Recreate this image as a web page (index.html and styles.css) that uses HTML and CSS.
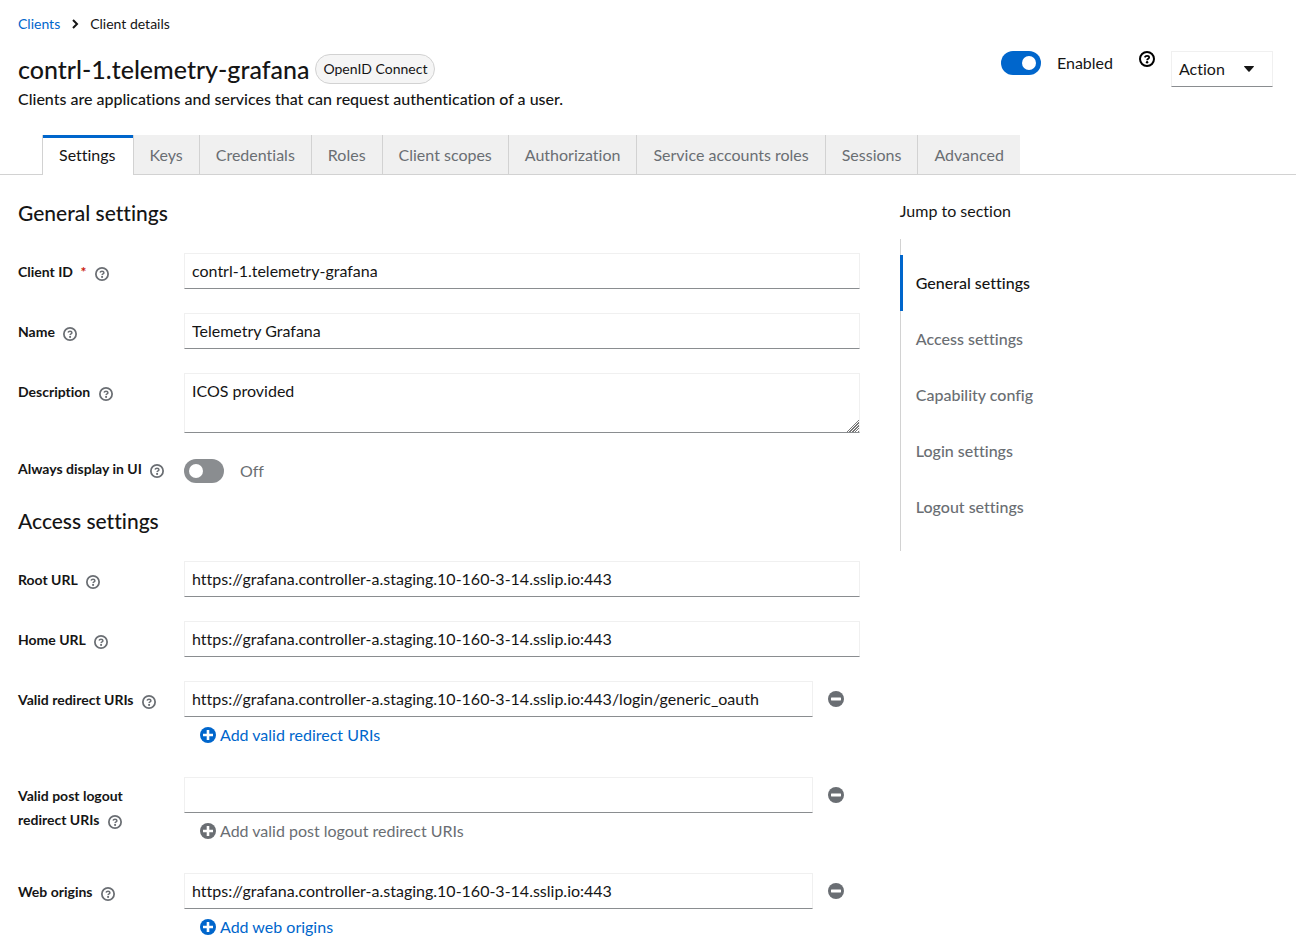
FILE: index.html
```html
<!DOCTYPE html>
<html lang="en">
  <head>
    <meta charset="UTF-8" />
    <meta name="viewport" content="width=device-width, initial-scale=1.0" />
    <title>Client details</title>
    <link rel="stylesheet" href="styles.css">
  </head>
  <body>
    <!-- shared icons -->
    <svg class="sprite" aria-hidden="true">
      <symbol id="help" viewBox="0 0 16 16">
        <circle cx="8" cy="8" r="7" fill="none" stroke="currentColor" stroke-width="2" />
        <path d="M5.700 6.400C6.100 5.300 7 4.900 8 4.900c1.200 0 2.200.600 2.200 1.600C10.200 7.800 8.100 7.800 8.100 9.200" fill="none" stroke="currentColor" stroke-width="1.700" />
        <circle cx="8.100" cy="11.300" r="1.200" fill="currentColor" />
      </symbol>
      <symbol id="plus" viewBox="0 0 16 16">
        <circle cx="8" cy="8" r="8" fill="currentColor" />
        <path d="M8 3v10M3 8h10" stroke="#fff" stroke-width="2.600" />
      </symbol>
      <symbol id="minus" viewBox="0 0 16 16">
        <circle cx="8" cy="8" r="8" fill="currentColor" />
        <rect x="3" y="6.600" width="10" height="2.800" rx=".4" fill="#fff" />
      </symbol>
    </svg>

    <header class="header">
      <nav class="breadcrumb" aria-label="Breadcrumb">
        <a href="#">Clients</a>
        <svg width="8" height="10" viewBox="0 0 8 10"><path d="M2 1l4 4-4 4" fill="none" stroke="#151515" stroke-width="2" /></svg>
        <span>Client details</span>
      </nav>
      <div class="title-row">
        <div>
          <div class="title">
            <h1>contrl-1.telemetry-grafana</h1>
            <span class="badge">OpenID Connect</span>
          </div>
          <p>Clients are applications and services that can request authentication of a user.</p>
        </div>
        <div class="toolbar">
          <label class="switch">
            <input type="checkbox" checked>
            <span>Enabled</span>
          </label>
          <button class="help help-dark" aria-label="Help"><svg><use href="#help" /></svg></button>
          <button class="action">Action <svg width="10" height="6" viewBox="0 0 10 6"><path d="M0 .5Q0 0 .5 0h9q.5 0 .5.500L5.600 5.600Q5 6 4.400 5.600z" fill="#151515" /></svg></button>
        </div>
      </div>
    </header>

    <nav class="tabs">
      <button class="tab active">Settings</button>
      <button class="tab">Keys</button>
      <button class="tab">Credentials</button>
      <button class="tab">Roles</button>
      <button class="tab">Client scopes</button>
      <button class="tab">Authorization</button>
      <button class="tab">Service accounts roles</button>
      <button class="tab">Sessions</button>
      <button class="tab">Advanced</button>
    </nav>

    <main class="content">
      <form>
        <h2 id="general">General settings</h2>
        <div class="row">
          <div class="label">
            <label for="client-id">Client ID <span class="required">*</span></label>
            <button type="button" class="help" aria-label="Help"><svg><use href="#help" /></svg></button>
          </div>
          <input type="text" class="field" id="client-id" value="contrl-1.telemetry-grafana">
        </div>
        <div class="row">
          <div class="label">
            <label for="name">Name</label>
            <button type="button" class="help" aria-label="Help"><svg><use href="#help" /></svg></button>
          </div>
          <input type="text" class="field" id="name" value="Telemetry Grafana">
        </div>
        <div class="row">
          <div class="label">
            <label for="description">Description</label>
            <button type="button" class="help" aria-label="Help"><svg><use href="#help" /></svg></button>
          </div>
          <textarea class="field" id="description">ICOS provided</textarea>
        </div>
        <div class="row row-switch">
          <div class="label">
            <label for="always">Always display in UI</label>
            <button type="button" class="help" aria-label="Help"><svg><use href="#help" /></svg></button>
          </div>
          <label class="switch">
            <input type="checkbox" id="always">
            <span>Off</span>
          </label>
        </div>

        <h2 id="access">Access settings</h2>
        <div class="row">
          <div class="label">
            <label for="root-url">Root URL</label>
            <button type="button" class="help" aria-label="Help"><svg><use href="#help" /></svg></button>
          </div>
          <input type="text" class="field" id="root-url" value="https://grafana.controller-a.staging.10-160-3-14.sslip.io:443">
        </div>
        <div class="row">
          <div class="label">
            <label for="home-url">Home URL</label>
            <button type="button" class="help" aria-label="Help"><svg><use href="#help" /></svg></button>
          </div>
          <input type="text" class="field" id="home-url" value="https://grafana.controller-a.staging.10-160-3-14.sslip.io:443">
        </div>
        <div class="row">
          <div class="label">
            <label for="redirect">Valid redirect URIs</label>
            <button type="button" class="help" aria-label="Help"><svg><use href="#help" /></svg></button>
          </div>
          <div>
            <div class="multi">
              <input type="text" class="field" id="redirect" value="https://grafana.controller-a.staging.10-160-3-14.sslip.io:443/login/generic_oauth">
              <button type="button" class="remove" aria-label="Remove"><svg><use href="#minus" /></svg></button>
            </div>
            <button type="button" class="add"><svg><use href="#plus" /></svg>Add valid redirect URIs</button>
          </div>
        </div>
        <div class="row">
          <div class="label">
            <label for="logout">Valid post logout redirect URIs</label>
            <button type="button" class="help" aria-label="Help"><svg><use href="#help" /></svg></button>
          </div>
          <div>
            <div class="multi">
              <input type="text" class="field" id="logout">
              <button type="button" class="remove" aria-label="Remove"><svg><use href="#minus" /></svg></button>
            </div>
            <button type="button" class="add" disabled><svg><use href="#plus" /></svg>Add valid post logout redirect URIs</button>
          </div>
        </div>
        <div class="row">
          <div class="label">
            <label for="origins">Web origins</label>
            <button type="button" class="help" aria-label="Help"><svg><use href="#help" /></svg></button>
          </div>
          <div>
            <div class="multi">
              <input type="text" class="field" id="origins" value="https://grafana.controller-a.staging.10-160-3-14.sslip.io:443">
              <button type="button" class="remove" aria-label="Remove"><svg><use href="#minus" /></svg></button>
            </div>
            <button type="button" class="add"><svg><use href="#plus" /></svg>Add web origins</button>
          </div>
        </div>
      </form>

      <aside class="jump">
        <div>Jump to section</div>
        <ul>
          <li class="current"><a href="#general">General settings</a></li>
          <li><a href="#access">Access settings</a></li>
          <li><a href="#capability">Capability config</a></li>
          <li><a href="#login">Login settings</a></li>
          <li><a href="#logout-settings">Logout settings</a></li>
        </ul>
      </aside>
    </main>
  </body>
</html>
```
FILE: styles.css
```css
* {
  box-sizing: border-box;
}

body {
  margin: 0;
  background: #fff;
  color: #151515;
  font-family: Lato, "Open Sans", sans-serif;
  font-size: 16px;
  line-height: 24px;
  font-variant-ligatures: none;
}

button,
input,
textarea {
  font: inherit;
  font-variant-ligatures: none;
  color: inherit;
}

button {
  border: 0;
  padding: 0;
  background: none;
}

h1,
h2,
p,
ul {
  margin: 0;
  padding: 0;
  font-weight: 500;
}

a {
  color: #06c;
  text-decoration: none;
}

svg {
  display: block;
}

.sprite {
  display: none;
}

/* header */
.header {
  padding: 12px 23px 24px 18px;
}

.breadcrumb {
  display: flex;
  align-items: center;
  gap: 11px;
  font-size: 14px;
}

.title-row {
  display: flex;
  justify-content: space-between;
  margin-top: 15px;
}

.title {
  display: flex;
  align-items: center;
  gap: 6px;
  height: 36px;
}

h1 {
  font-size: 25px;
}

.badge {
  border: 1px solid #d2d2d2;
  border-radius: 20px;
  padding: 1px 7px;
  background: #f5f5f5;
  font-size: 14px;
  line-height: 26px;
}

.toolbar {
  display: flex;
  align-items: flex-start;
}

.toolbar .switch {
  margin-right: 26px;
}

.action {
  display: flex;
  align-items: center;
  justify-content: space-between;
  width: 102px;
  height: 36px;
  margin-left: 16px;
  padding: 0 18px 0 7px;
  border: 1px solid #f0f0f0;
  border-bottom-color: #8a8d90;
}

.switch {
  display: flex;
  align-items: center;
  gap: 16px;
}

.switch input {
  appearance: none;
  display: flex;
  align-items: center;
  width: 40px;
  height: 24px;
  margin: 0;
  padding: 0 5px;
  border-radius: 12px;
  background: #8a8d90;
}

.switch input::before {
  content: "";
  width: 14px;
  height: 14px;
  border-radius: 50%;
  background: #fff;
}

.switch input:checked {
  justify-content: flex-end;
  background: #06c;
}

.switch input:not(:checked) + span {
  color: #6a6e73;
}

.help {
  color: #6a6e73;
}

.help svg {
  width: 14px;
  height: 14px;
}

.help-dark {
  color: #000;
}

.help-dark svg,
.add svg,
.remove svg {
  width: 16px;
  height: 16px;
}

/* tabs */
.tabs {
  display: flex;
  padding-left: 42px;
  box-shadow: inset 0 -1px #d2d2d2;
}

.tab {
  height: 40px;
  padding: 0 16px;
  border-right: 1px solid #d2d2d2;
  border-bottom: 1px solid #d2d2d2;
  background: #f0f0f0;
  color: #6a6e73;
}

.tab:last-child {
  border-right: 0;
}

.tab.active {
  padding: 0 17px 0 16px;
  border-left: 1px solid #d2d2d2;
  border-bottom: 0;
  background: linear-gradient(#06c 3px, #fff 3px);
  color: #151515;
}

/* form */
.content {
  display: grid;
  grid-template-columns: 69fr 31fr;
  gap: 40px;
  padding: 24px 18px 0;
}

h2 {
  margin-bottom: 26px;
  font-size: 21px;
  line-height: 28px;
}

.row {
  display: grid;
  grid-template-columns: 150px 1fr;
  column-gap: 16px;
  margin-bottom: 24px;
}

.label {
  padding-top: 7px;
  font-size: 14px;
  font-weight: 700;
}

.label .help {
  margin-left: 5px;
  vertical-align: -4px;
}

.required {
  margin-left: 4px;
  color: #c9190b;
}

.row-switch .label {
  padding-top: 0;
}

.row-switch .switch {
  padding-top: 2px;
}

.field {
  width: 100%;
  height: 36px;
  padding: 0 7px 2px;
  border: 1px solid #f0f0f0;
  border-bottom-color: #8a8d90;
  border-radius: 0;
  background: #fff;
}

textarea.field {
  display: block;
  height: 60px;
  padding: 5px 7px;
}

textarea::-webkit-resizer {
  background: linear-gradient(135deg, #fff 60%, transparent 60%), repeating-linear-gradient(135deg, #777 0 1px, #fff 1px 2px);
}

.multi {
  display: flex;
}

.remove {
  flex-shrink: 0;
  padding: 0 16px 0 15px;
  color: #6a6e73;
}

.add {
  display: flex;
  align-items: center;
  gap: 4px;
  height: 36px;
  padding: 0 16px;
  color: #06c;
}

.add:disabled {
  color: #6a6e73;
}

/* jump links */
.jump ul {
  margin-top: 16px;
  padding: 16px 0;
  border-left: 1px solid #d2d2d2;
  list-style: none;
}

.jump a {
  display: block;
  padding: 16px 15px;
  color: #6a6e73;
}

.jump .current a {
  margin-left: -1px;
  padding-left: 13px;
  border-left: 3px solid #06c;
  color: #151515;
}
```
